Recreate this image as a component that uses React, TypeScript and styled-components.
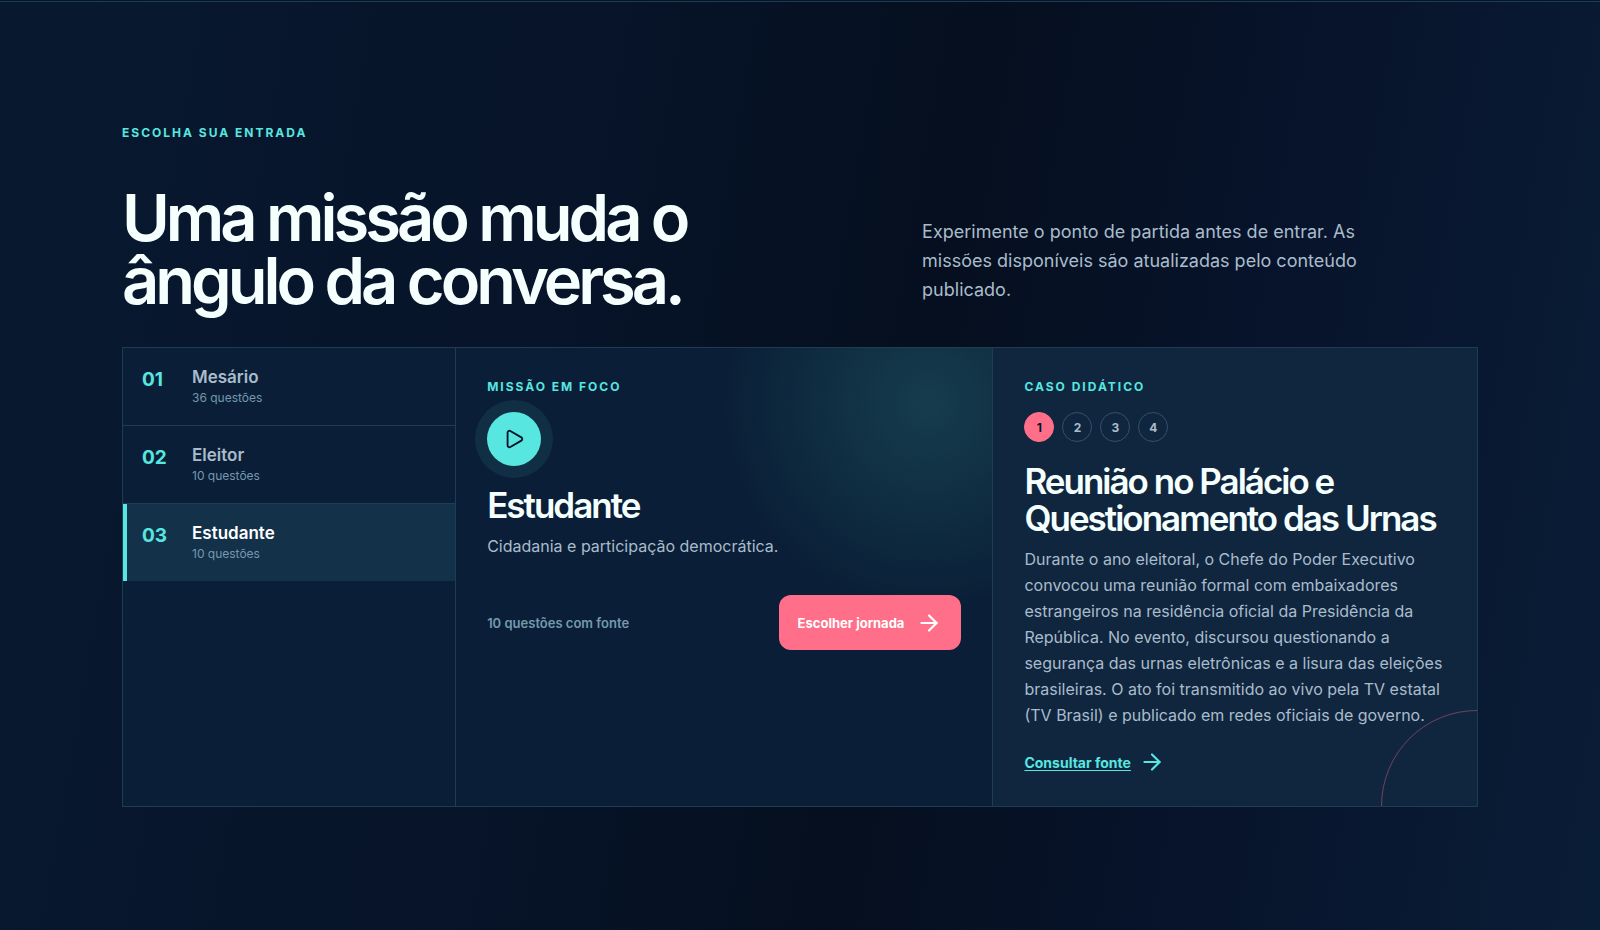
import React, { useState } from "react";
import styled, { createGlobalStyle } from "styled-components";
import { ArrowRight, Play } from "lucide-react";

const color = {
  mint: "#57e6e0",
  coral: "#ff6f89",
  white: "#f4fffe",
  text: "#a9bccb",
  muted: "#7499ae",
  line: "#1d3d53",
  panel: "#0a1f37",
  panelAlt: "#10263f",
  active: "#14314a",
  ink: "#06142a",
};

const GlobalStyle = createGlobalStyle`
  *, *::before, *::after { box-sizing: border-box; }
  body {
    margin: 0;
    padding-top: 1px;
    background: ${color.ink};
    color: ${color.text};
    font-family: Inter, "Open Sans", sans-serif;
    font-size: 16px;
  }
  h2, h3, p { margin: 0; }
  button { font: inherit; cursor: pointer; }
`;

const Section = styled.section`
  min-height: calc(100vh - 1px);
  padding: 123px 122px 120px;
  border-top: 1px solid ${color.line};
  background: linear-gradient(100deg, #08192f 0%, #07142a 32%, #050f1f 56%, #07132a 74%, #0a1d37 100%);
`;

const Eyebrow = styled.p`
  color: ${color.mint};
  font-size: 12px;
  font-weight: 700;
  line-height: 16px;
  letter-spacing: 2px;
  text-transform: uppercase;
`;

const Header = styled.header`
  display: grid;
  grid-template-columns: 1.15fr 0.85fr;
  column-gap: 48px;
  align-items: end;
  margin: 45px 0 35px;
`;

const Title = styled.h2`
  color: ${color.white};
  font-size: 65px;
  font-weight: 600;
  line-height: 63px;
  letter-spacing: -4px;
  max-width: 640px;
`;

const Lead = styled.p`
  max-width: 440px;
  padding-bottom: 8px;
  font-size: 18px;
  line-height: 29px;
`;

const Board = styled.div`
  display: grid;
  grid-template-columns: 0.62fr 1fr 0.9fr;
  border: 1px solid ${color.line};
  background: ${color.panel};
`;

const JourneyList = styled.div`
  display: flex;
  flex-direction: column;
  border-right: 1px solid ${color.line};
`;

const JourneyButton = styled.button<{ $active: boolean }>`
  display: grid;
  grid-template-columns: 50px 1fr;
  align-items: start;
  padding: 18px 19px 17px;
  border: 0;
  background: ${(p) => (p.$active ? color.active : "transparent")};
  box-shadow: ${(p) => (p.$active ? `inset 4px 0 0 ${color.mint}` : "none")};
  color: ${(p) => (p.$active ? "#ffffff" : color.text)};
  text-align: left;

  &:not(:last-child) {
    border-bottom: 1px solid ${color.line};
  }
`;

const JourneyNumber = styled.span`
  color: ${color.mint};
  font-size: 19px;
  font-weight: 700;
  line-height: 28px;
`;

const JourneyText = styled.span`
  display: flex;
  flex-direction: column;
`;

const JourneyName = styled.strong`
  font-size: 17px;
  font-weight: 600;
  line-height: 22px;
`;

const JourneyCount = styled.small`
  color: ${color.muted};
  font-size: 12px;
  line-height: 20px;
`;

const Focus = styled.article`
  display: flex;
  flex-direction: column;
  align-items: flex-start;
  padding: 31px;
  border-right: 1px solid ${color.line};
  background: radial-gradient(circle at 88% 12%, rgba(87, 230, 204, 0.15), transparent 205px);
`;

const PlayDisc = styled.span`
  display: grid;
  place-items: center;
  width: 54px;
  height: 54px;
  margin: 17px 0 21px;
  border-radius: 50%;
  background: ${color.mint};
  box-shadow: 0 0 0 12px rgba(87, 230, 224, 0.08);
  color: ${color.ink};
`;

const CardTitle = styled.h3`
  color: ${color.white};
  font-size: 35px;
  font-weight: 600;
  line-height: 37px;
  letter-spacing: -2px;
`;

const CardText = styled.p`
  margin-top: 9px;
  font-size: 16px;
  line-height: 26px;
`;

const FocusFooter = styled.footer`
  display: flex;
  align-items: center;
  justify-content: space-between;
  align-self: stretch;
  margin-top: 36px;
`;

const SourceCount = styled.span`
  color: ${color.muted};
  font-size: 13px;
  font-weight: 600;
`;

const PrimaryButton = styled.button`
  display: inline-flex;
  align-items: center;
  gap: 12px;
  height: 55px;
  padding: 0 19px;
  border: 0;
  border-radius: 12px;
  background: ${color.coral};
  color: #ffffff;
  font-size: 13px;
  font-weight: 700;
`;

const Case = styled.article`
  position: relative;
  overflow: hidden;
  padding: 31px;
  background: ${color.panelAlt};

  &::after {
    content: "";
    position: absolute;
    right: -96px;
    bottom: -96px;
    width: 192px;
    height: 192px;
    border: 1px solid rgba(255, 111, 137, 0.4);
    border-radius: 50%;
    pointer-events: none;
  }
`;

const Steps = styled.div`
  display: flex;
  gap: 8px;
  margin: 17px 0 21px;
`;

const Step = styled.button<{ $active: boolean }>`
  width: 30px;
  height: 30px;
  padding: 0;
  border: 1px solid ${(p) => (p.$active ? color.coral : "#34506a")};
  border-radius: 50%;
  background: ${(p) => (p.$active ? color.coral : "transparent")};
  color: ${(p) => (p.$active ? color.ink : color.text)};
  font-size: 12px;
  font-weight: 700;
`;

const SourceLink = styled.a`
  display: flex;
  align-items: center;
  gap: 8px;
  width: fit-content;
  margin-top: 21px;
  color: ${color.mint};
  font-size: 14px;
  font-weight: 700;
  text-underline-offset: 2px;
`;

const journeys = [
  { name: "Mesário", count: 36 },
  { name: "Eleitor", count: 10 },
  { name: "Estudante", count: 10 },
];

export default function App() {
  const [journey, setJourney] = useState(2);
  const [step, setStep] = useState(1);

  return (
    <>
      <GlobalStyle />
      <Section>
        <Eyebrow>Escolha sua entrada</Eyebrow>
        <Header>
          <Title>Uma missão muda o ângulo da conversa.</Title>
          <Lead>
            Experimente o ponto de partida antes de entrar. As missões disponíveis são atualizadas
            pelo conteúdo publicado.
          </Lead>
        </Header>
        <Board>
          <JourneyList>
            {journeys.map((item, i) => (
              <JourneyButton
                key={item.name}
                type="button"
                $active={i === journey}
                aria-pressed={i === journey}
                onClick={() => setJourney(i)}
              >
                <JourneyNumber>0{i + 1}</JourneyNumber>
                <JourneyText>
                  <JourneyName>{item.name}</JourneyName>
                  <JourneyCount>{item.count} questões</JourneyCount>
                </JourneyText>
              </JourneyButton>
            ))}
          </JourneyList>
          <Focus>
            <Eyebrow>Missão em foco</Eyebrow>
            <PlayDisc>
              <Play size={22} aria-hidden="true" />
            </PlayDisc>
            <CardTitle>{journeys[journey].name}</CardTitle>
            <CardText>Cidadania e participação democrática.</CardText>
            <FocusFooter>
              <SourceCount>{journeys[journey].count} questões com fonte</SourceCount>
              <PrimaryButton type="button">
                Escolher jornada
                <ArrowRight size={26} aria-hidden="true" />
              </PrimaryButton>
            </FocusFooter>
          </Focus>
          <Case>
            <Eyebrow>Caso didático</Eyebrow>
            <Steps>
              {[1, 2, 3, 4].map((n) => (
                <Step
                  key={n}
                  type="button"
                  $active={n === step}
                  aria-pressed={n === step}
                  onClick={() => setStep(n)}
                >
                  {n}
                </Step>
              ))}
            </Steps>
            <CardTitle>Reunião no Palácio e Questionamento das Urnas</CardTitle>
            <CardText>
              Durante o ano eleitoral, o Chefe do Poder Executivo convocou uma reunião formal com
              embaixadores estrangeiros na residência oficial da Presidência da República. No
              evento, discursou questionando a segurança das urnas eletrônicas e a lisura das
              eleições brasileiras. O ato foi transmitido ao vivo pela TV estatal (TV Brasil) e
              publicado em redes oficiais de governo.
            </CardText>
            <SourceLink href="#fonte">
              Consultar fonte
              <ArrowRight size={26} aria-hidden="true" />
            </SourceLink>
          </Case>
        </Board>
      </Section>
    </>
  );
}
